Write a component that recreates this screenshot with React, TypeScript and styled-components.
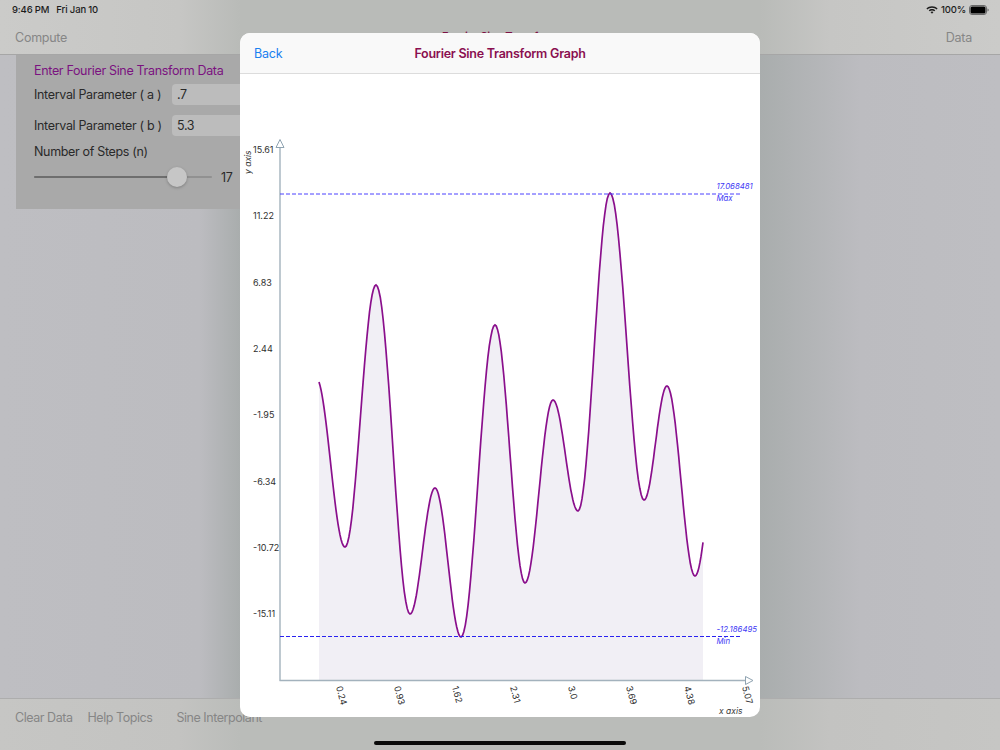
import React from "react";
import styled, { createGlobalStyle } from "styled-components";

const Global = createGlobalStyle`
  html, body { margin: 0; padding: 0; background: #bebec2; }
  * { box-sizing: border-box; }
`;

const Page = styled.div`
  position: relative;
  width: 1000px;
  height: 750px;
  overflow: hidden;
  display: flex;
  flex-direction: column;
  background: #bebec2;
  font-family: Inter, "Liberation Sans", sans-serif;
  color: #2a2a2a;
`;

const TopBar = styled.header`
  height: 55px;
  flex: none;
  background: linear-gradient(90deg, #cbcbc9 0, #c6c6c4 180px, #b9bbb8 240px, #b9bbb8 760px, #c6c6c4 830px, #cbcbc9 1000px);
  border-bottom: 1px solid #a6a6a6;
  display: flex;
  flex-direction: column;
`;

const StatusRow = styled.div`
  height: 19px;
  padding: 0 11px 0 12px;
  display: flex;
  align-items: center;
  justify-content: space-between;
  font-size: 9.5px;
  font-weight: 500;
  letter-spacing: -0.15px;
  color: #1c1c1c;
`;

const StatusGroup = styled.div<{ $gap: number }>`
  display: flex;
  align-items: center;
  gap: ${(p) => p.$gap}px;
`;

const NavRow = styled.div`
  flex: 1;
  position: relative;
  padding: 1px 28px 0 15px;
  display: flex;
  align-items: center;
  justify-content: space-between;
  font-size: 12.5px;
  letter-spacing: -0.25px;
  color: #868686;
`;

const NavTitle = styled.div`
  position: absolute;
  left: 0;
  right: 0;
  top: 10px;
  text-align: center;
  font-size: 11px;
  font-weight: 600;
  color: #7d1244;
`;

const Main = styled.main`
  flex: 1;
  padding: 0 0 0 16px;
  background: linear-gradient(90deg, #bebec2 0, #bcbcc0 200px, #a9adad 240px, #a9adad 760px, #bcbcc0 860px, #bebec2 1000px);
`;

const Panel = styled.section`
  width: 260px;
  height: 154px;
  padding: 8px 18px;
  background: #a9a9a9;
  font-size: 12.5px;
  letter-spacing: -0.33px;
  display: flex;
  flex-direction: column;
`;

const PanelTitle = styled.div`
  color: #7b1280;
  height: 15px;
  line-height: 15px;
`;

const FieldRow = styled.div<{ $top: number }>`
  margin-top: ${(p) => p.$top}px;
  height: 21px;
  display: flex;
  align-items: center;
`;

const FieldLabel = styled.span`
  width: 138px;
  flex: none;
`;

const Field = styled.div`
  width: 90px;
  height: 21px;
  padding-left: 5px;
  line-height: 21px;
  background: #bcbcbc;
  border-radius: 4px;
`;

const StepsLabel = styled.div`
  margin-top: 8px;
  height: 15px;
  line-height: 15px;
`;

const SliderRow = styled.div`
  margin-top: 8px;
  height: 20px;
  display: flex;
  align-items: center;
  gap: 9px;
`;

const Slider = styled.div`
  position: relative;
  width: 178px;
  height: 2px;
  background: #919191;
  border-radius: 1px;
`;

const SliderFill = styled.div`
  height: 2px;
  background: #6e6e6e;
  border-radius: 1px;
`;

const Thumb = styled.div`
  position: absolute;
  top: -9px;
  width: 20px;
  height: 20px;
  margin-left: -10px;
  border-radius: 50%;
  background: #c6c6c6;
  box-shadow: 0 1px 3px rgba(0, 0, 0, 0.25);
`;

const BottomBar = styled.footer`
  height: 52px;
  flex: none;
  background: linear-gradient(90deg, #c6c6c4 0, #c3c3c1 180px, #babcb9 240px, #babcb9 760px, #c3c3c1 830px, #c6c6c4 1000px);
  border-top: 1px solid #adadad;
  padding: 11px 15px 0;
  display: flex;
  align-items: flex-start;
  font-size: 12.5px;
  letter-spacing: -0.45px;
  color: #868686;
`;

const ToolItem = styled.span<{ $left: number }>`
  margin-left: ${(p) => p.$left}px;
  line-height: 15px;
  white-space: nowrap;
`;

const HomeBar = styled.div`
  position: absolute;
  left: 374px;
  bottom: 5px;
  width: 252px;
  height: 4px;
  border-radius: 2px;
  background: #0a0a0a;
`;

const Modal = styled.div`
  position: absolute;
  left: 240px;
  top: 33px;
  width: 520px;
  height: 684px;
  border-radius: 10px;
  overflow: hidden;
  background: #fff;
  display: flex;
  flex-direction: column;
`;

const ModalHeader = styled.div`
  position: relative;
  height: 41px;
  flex: none;
  background: #f9f9f9;
  border-bottom: 1px solid #dcdcdc;
  display: flex;
  align-items: center;
  justify-content: center;
`;

const BackLink = styled.span`
  position: absolute;
  left: 14px;
  top: 13px;
  font-size: 12.5px;
  letter-spacing: -0.2px;
  color: #1a80f0;
`;

const ModalTitle = styled.div`
  font-size: 12.5px;
  font-weight: 600;
  letter-spacing: -0.25px;
  color: #8a0f50;
`;

const Chart = styled.svg`
  display: block;
  flex: 1;
  width: 520px;
`;

const extrema: [number, number][] = [
  [345, 547], [376, 285], [410, 614], [435, 488], [461, 637],
  [495, 325], [525, 583], [553, 400], [578, 511], [610, 193],
  [644, 500], [667, 386], [695, 576],
];

function buildCurve(): string {
  const pts: [number, number][] = [];
  // leading partial half-wave, from the start of the curve down to the first minimum
  const lead = { x0: 316, y0: 377.6 };
  for (let x = 319; x < 345; x += 1) {
    const t = (x - lead.x0) / (345 - lead.x0);
    pts.push([x, lead.y0 + (547 - lead.y0) * (1 - Math.cos(Math.PI * t)) / 2]);
  }
  for (let i = 0; i < extrema.length - 1; i++) {
    const [x0, y0] = extrema[i];
    const [x1, y1] = extrema[i + 1];
    for (let s = 0; s < 24; s++) {
      const t = s / 24;
      pts.push([x0 + (x1 - x0) * t, y0 + (y1 - y0) * (1 - Math.cos(Math.PI * t)) / 2]);
    }
  }
  // trailing partial half-wave up from the last minimum
  for (let x = 695; x <= 703; x += 1) {
    const t = (x - 695) / 26;
    pts.push([x, 576 + (420 - 576) * (1 - Math.cos(Math.PI * t)) / 2]);
  }
  return pts.map(([x, y], i) => `${i ? "L" : "M"}${x.toFixed(1)} ${y.toFixed(1)}`).join(" ");
}

const curve = buildCurve();
const yTicks: [string, number][] = [
  ["15.61", 149], ["11.22", 215], ["6.83", 282], ["2.44", 348],
  ["-1.95", 414], ["-6.34", 481], ["-10.72", 547], ["-15.11", 613],
];
const xTicks: [string, number][] = [
  ["0.24", 336], ["0.93", 394], ["1.62", 452], ["2.31", 510],
  ["3.0", 568], ["3.69", 626], ["4.38", 684], ["5.07", 742],
];

export default function App() {
  return (
    <Page>
      <Global />
      <TopBar>
        <StatusRow>
          <StatusGroup $gap={7}>
            <span>9:46 PM</span>
            <span>Fri Jan 10</span>
          </StatusGroup>
          <StatusGroup $gap={3}>
            <svg width="12" height="9" viewBox="0 0 12 9" fill="#1c1c1c">
              <path d="M6 1.2c2.2 0 4.1.8 5.6 2.2l-1 1.1C9.4 3.4 7.8 2.7 6 2.7s-3.4.7-4.6 1.8l-1-1.1C1.900 2 3.800 1.200 6 1.200z" />
              <path d="M6 3.900c1.300 0 2.400.5 3.300 1.300l-1 1.100C7.700 5.800 6.900 5.400 6 5.400s-1.700.4-2.300.9l-1-1.100C3.600 4.400 4.700 3.900 6 3.900z" />
              <path d="M6 6.400c.6 0 1.100.2 1.500.6L6 8.700 4.500 7c.4-.4.900-.6 1.500-.6z" />
            </svg>
            <span>100%</span>
            <svg width="20" height="10" viewBox="0 0 20 10">
              <rect x="0.500" y="0.500" width="17" height="9" rx="2.500" fill="none" stroke="#6a6a6a" />
              <rect x="1.500" y="1.500" width="15" height="7" rx="1.500" fill="#000" />
              <path d="M18.500 3.500c.8.200 1.200.8 1.200 1.500s-.4 1.300-1.200 1.500z" fill="#6a6a6a" />
            </svg>
          </StatusGroup>
        </StatusRow>
        <NavRow>
          <span>Compute</span>
          <NavTitle>Fourier Sine Transform</NavTitle>
          <span>Data</span>
        </NavRow>
      </TopBar>
      <Main>
        <Panel>
          <PanelTitle>Enter Fourier Sine Transform Data</PanelTitle>
          <FieldRow $top={6}>
            <FieldLabel>Interval Parameter ( a )</FieldLabel>
            <Field>.7</Field>
          </FieldRow>
          <FieldRow $top={10}>
            <FieldLabel>Interval Parameter ( b )</FieldLabel>
            <Field>5.3</Field>
          </FieldRow>
          <StepsLabel>Number of Steps (n)</StepsLabel>
          <SliderRow>
            <Slider>
              <SliderFill style={{ width: `${(143 / 178) * 100}%` }} />
              <Thumb style={{ left: `${(143 / 178) * 100}%` }} />
            </Slider>
            <span>17</span>
          </SliderRow>
        </Panel>
      </Main>
      <BottomBar>
        <ToolItem $left={0}>Clear Data</ToolItem>
        <ToolItem $left={15}>Help Topics</ToolItem>
        <ToolItem $left={24}>Sine Interpolant</ToolItem>
      </BottomBar>
      <HomeBar />
      <Modal>
        <ModalHeader>
          <BackLink>Back</BackLink>
          <ModalTitle>Fourier Sine Transform Graph</ModalTitle>
        </ModalHeader>
        <Chart viewBox="240 74 520 643">
          <path d={`${curve} L703 680 L319 680 Z`} fill="#f1eff5" stroke="none" />
          <path d={curve} fill="none" stroke="#8a0f8c" strokeWidth="1.700" />
          <path d="M280 681V146M279.500 680.500H746" fill="none" stroke="#a3b2bd" strokeWidth="1.400" />
          <path d="M276 147.500L280 139.500L284 147.500Z" fill="#fff" stroke="#8fa3b1" />
          <path d="M745.500 676.500L753 680.500L745.500 684.500Z" fill="#fff" stroke="#8fa3b1" />
          <line x1="280" y1="194" x2="741" y2="194" stroke="#4a40ff" strokeWidth="1" strokeDasharray="4 2" />
          <line x1="280" y1="636.500" x2="741" y2="636.500" stroke="#2a22f0" strokeWidth="1" strokeDasharray="4 2" />
          <g fontFamily="Inter, 'Liberation Sans', sans-serif" fontSize="9" fill="#2f2f2f">
            {yTicks.map(([label, y]) => (
              <text key={label} x="253" y={y + 3.5}>{label}</text>
            ))}
            {xTicks.map(([label, x]) => (
              <text key={label} x={x} y="687" transform={`rotate(75 ${x} 687)`}>{label}</text>
            ))}
          </g>
          <g fontFamily="Inter, 'Liberation Sans', sans-serif" fontSize="8.500" fontStyle="italic" fill="#3a3a3a">
            <text x="719" y="713.500">x axis</text>
            <text x="251" y="174" transform="rotate(-90 251 174)">y axis</text>
          </g>
          <g fontFamily="Inter, 'Liberation Sans', sans-serif" fontSize="7.800" fontStyle="italic" fill="#4038f5">
            <text x="716.500" y="189">17.068481</text>
            <text x="716.500" y="201">Max</text>
            <text x="716.500" y="632">-12.186495</text>
            <text x="716.500" y="644">Min</text>
          </g>
        </Chart>
      </Modal>
    </Page>
  );
}
